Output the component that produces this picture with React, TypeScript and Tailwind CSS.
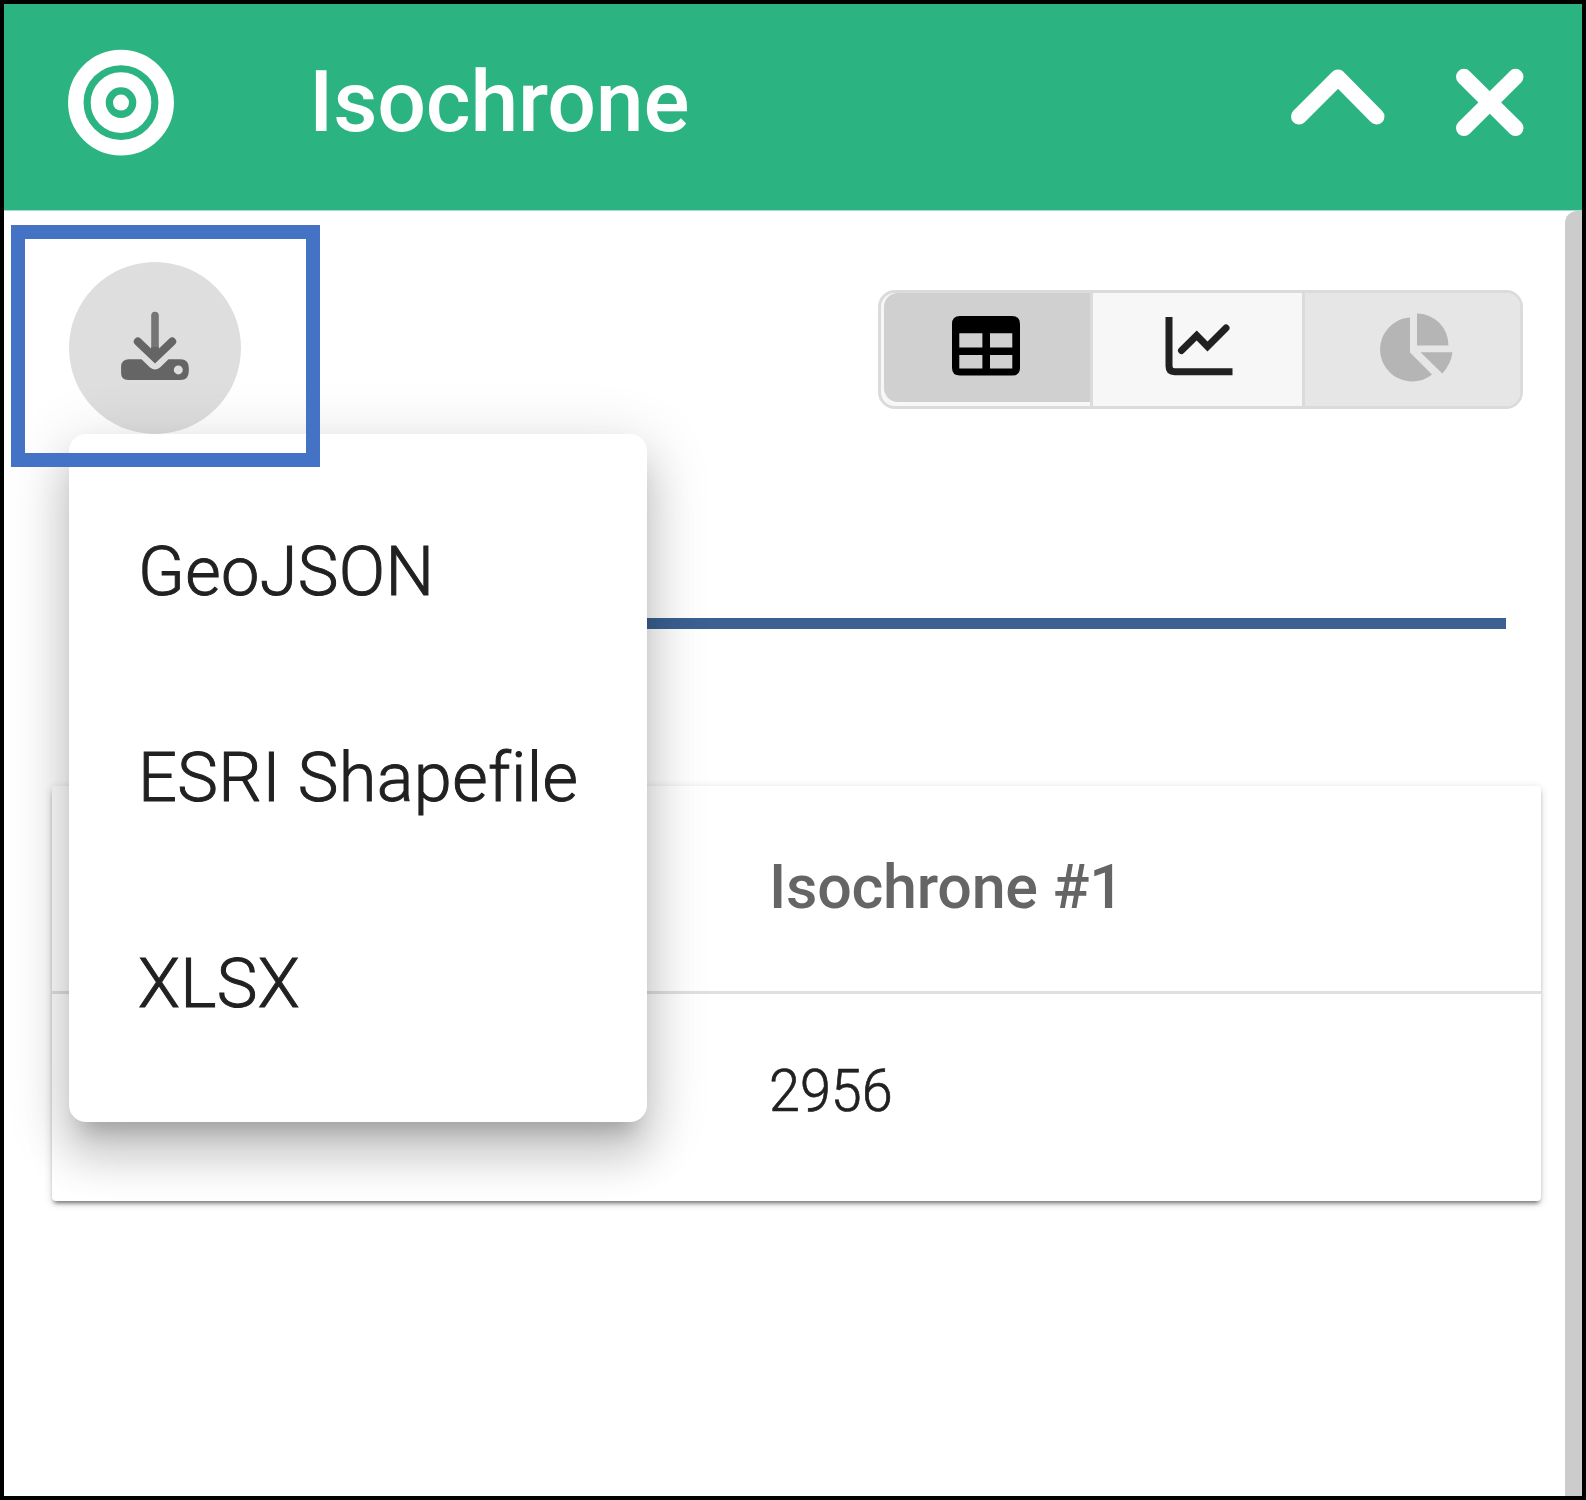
import React from "react";

const formats = ["GeoJSON", "ESRI Shapefile", "XLSX"];

function BullseyeIcon() {
  return (
    <svg className="h-[108px] w-[108px]" viewBox="0 0 108 108" fill="none" stroke="#fff">
      <circle cx="54" cy="53.6" r="45.2" strokeWidth="15.5" />
      <circle cx="54" cy="53.6" r="22.8" strokeWidth="15" />
      <circle cx="54" cy="53.6" r="8" fill="#fff" stroke="none" />
    </svg>
  );
}

function ChevronUpIcon() {
  return (
    <svg className="h-[60px] w-[100px]" viewBox="0 0 100 60" fill="none" stroke="#fff" strokeWidth="16" strokeLinecap="round" strokeLinejoin="round">
      <path d="M11 49.5 50 10.5 88.5 49.5" />
    </svg>
  );
}

function CloseIcon() {
  return (
    <svg className="h-[70px] w-[70px]" viewBox="0 0 70 70" fill="none" stroke="#fff" strokeWidth="16" strokeLinecap="round">
      <path d="M9 9.8 60.5 61M60.5 9.8 9 61" />
    </svg>
  );
}

function DownloadIcon() {
  return (
    <svg className="h-[70px] w-[70px]" viewBox="0 0 70 70" fill="none">
      <path d="M35 4.5V40" stroke="#757575" strokeWidth="7.6" strokeLinecap="round" />
      <path d="M35 36V48" stroke="#656565" strokeWidth="7.6" />
      <path d="M17.8 30.5 35 47 52.2 30.5" stroke="#656565" strokeWidth="8" strokeLinecap="round" />
      <path
        fillRule="evenodd"
        fill="#656565"
        d="M9 48.3H21.5L30 56.5Q35 60.5 40 56.5L48.5 48.3H60.5Q68.8 48.3 68.8 57V60Q68.8 69 60.5 69H8Q1.1 69 1.1 62V56Q1.1 48.3 9 48.3ZM58.3 54.4a4.5 4.5 0 1 0 0 9 4.5 4.5 0 0 0 0-9Z"
      />
    </svg>
  );
}

function TableIcon() {
  return (
    <svg className="h-[60px] w-[68px]" viewBox="0 0 68 60">
      <path
        fillRule="evenodd"
        fill="#000"
        d="M8 0H60Q68 0 68 8V52Q68 59.5 60 59.5H8Q0 59.5 0 52V8Q0 0 8 0ZM7.3 17.2V31.4H30.4V17.2ZM38 17.2V31.4H60.3V17.2ZM7.3 39V52.4H30.4V39ZM38 39V52.4H60.3V39Z"
      />
    </svg>
  );
}

function ChartIcon() {
  return (
    <svg className="h-[60px] w-[68px]" viewBox="0 0 68 60" fill="none" stroke="#212121" strokeLinejoin="miter">
      <path d="M4 1V50Q4 55.7 9.5 55.7H67.5" strokeWidth="7" />
      <path d="M16.5 34.5 31.7 19.5 42.5 30.5 61 12" strokeWidth="7" strokeLinecap="round" />
    </svg>
  );
}

function PieIcon() {
  return (
    <svg className="h-[70px] w-[74px]" viewBox="0 0 74 70" fill="#b5b5b5">
      <path d="M30 4.5V39.5L52 61.5A32 32 0 1 1 30 4.5Z" />
      <path d="M37 .5A31.5 32 0 0 1 68.5 32.5H37Z" />
      <path d="M40.5 39.3H72.5Q71 51 62.3 60.5Z" />
    </svg>
  );
}

export default function App() {
  return (
    <div className="flex h-[1500px] w-[1586px] flex-col overflow-hidden border-4 border-black bg-white font-['Roboto',sans-serif]">
      <header className="flex h-[206px] shrink-0 items-center bg-[#2bb382] pr-[57px] pb-[9px] pl-[63px]">
        <BullseyeIcon />
        <h1 className="-mt-[2px] ml-[134px] flex-1 text-[86px] leading-[100px] font-medium tracking-[-0.2px] text-white">
          Isochrone
        </h1>
        <button className="-mt-[11px]"><ChevronUpIcon /></button>
        <button className="-mt-px ml-[67px]"><CloseIcon /></button>
      </header>

      <div className="relative flex min-h-0 flex-1 border-t border-[#a5dfca]">
        <main className="flex flex-1 flex-col">
          <div className="flex justify-between pt-[51px] pr-[42px] pl-[65px]">
            <div className="relative">
              <button className="flex h-[172px] w-[172px] items-center justify-center rounded-full bg-[#dedede] pb-[4px]">
                <DownloadIcon />
              </button>
              <ul className="absolute top-[172px] left-0 z-10 h-[688px] w-[578px] rounded-[17px] bg-white py-[35px] shadow-[0_21px_21px_-13px_rgba(0,0,0,0.2),0_34px_43px_4px_rgba(0,0,0,0.14),0_13px_60px_9px_rgba(0,0,0,0.12)]">
                {formats.map((name) => (
                  <li key={name} className="flex h-[206px] items-center pl-[69px] text-[68.5px] font-light tracking-[0.35px] whitespace-nowrap text-[#212121] [-webkit-text-stroke:1px_#212121]">
                    {name}
                  </li>
                ))}
              </ul>
            </div>
            <div className="mt-[28px] flex h-[119px] w-[645px] overflow-hidden rounded-[17px] border-[3px] border-[#dbdbdb] bg-[#f7f7f7]">
              <button className="flex w-[212px] border-r-[3px] border-[#dbdbdb] pb-[4px] pl-[3px]">
                <span className="flex flex-1 items-center justify-center rounded-l-[14px] bg-[#d0d0d0] pr-[2px] pb-[3px]">
                  <TableIcon />
                </span>
              </button>
              <button className="flex w-[212px] items-center justify-center border-r-[3px] border-[#dbdbdb] pb-[8px] pl-[2px]">
                <ChartIcon />
              </button>
              <button className="flex flex-1 items-center justify-center bg-[#e6e6e6] pb-[4px] pl-[8px]">
                <PieIcon />
              </button>
            </div>
          </div>

          <div className="mt-[184px] mr-[59px] ml-[65px] h-[11px] bg-[#3c6092]" />

          <table className="mt-[157px] ml-[48px] w-[1489px] table-fixed border-collapse rounded-[4px] text-left shadow-[0_4px_4px_-2px_rgba(0,0,0,0.5),0_2px_8px_rgba(0,0,0,0.16)]">
            <thead>
              <tr className="h-[206px] border-b-[3px] border-[#e0e0e0]">
                <th className="w-[650px]" />
                <th className="pb-[2px] pl-[67px] text-[61px] font-medium tracking-[-0.25px] text-[#656565]">Isochrone #1</th>
              </tr>
            </thead>
            <tbody>
              <tr className="h-[209px]">
                <td />
                <td className="pb-[12px] pl-[67px] text-[59px] font-light text-[#212121] [-webkit-text-stroke:0.7px_#212121]">
                  <span className="inline-block origin-left scale-x-[0.945]">2956</span>
                </td>
              </tr>
            </tbody>
          </table>
        </main>

        <div className="w-[17px] shrink-0 rounded-tl-[12px] bg-[#cccccc]" />

        {/* Highlight frame over the download button */}
        <div className="pointer-events-none absolute top-[14px] left-[7px] z-20 h-[242px] w-[309px] border-[14px] border-[#4472c4]" />
      </div>
    </div>
  );
}
